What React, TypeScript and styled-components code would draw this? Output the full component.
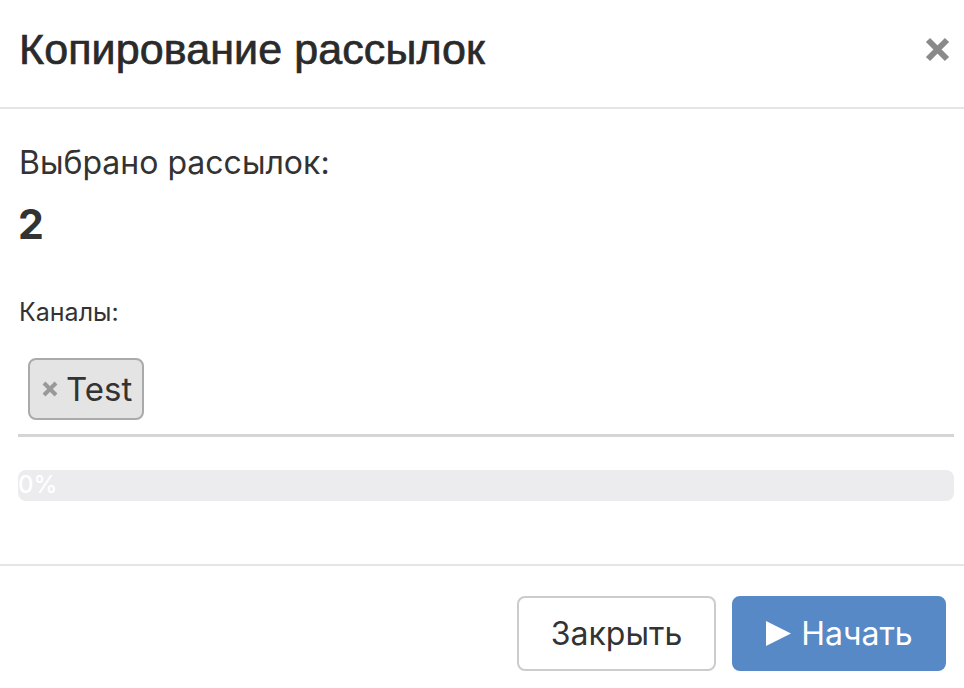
import React from "react";
import styled, { createGlobalStyle } from "styled-components";

const Global = createGlobalStyle`
  html, body { margin: 0; padding: 0; background: #fff; }
  body { font-family: Inter, "Noto Sans", sans-serif; color: #333; }
  * { box-sizing: border-box; }
`;

const Modal = styled.div`
  width: 964px;
  display: flex;
  flex-direction: column;
  background: #fff;
`;

const Header = styled.div`
  height: 109px;
  display: flex;
  align-items: center;
  justify-content: space-between;
  padding: 0 14px 8px 19px;
  border-bottom: 2px solid #e5e5e5;
`;

const Title = styled.h4`
  margin: 0;
  font-family: "Liberation Sans", Arial, sans-serif;
  font-weight: 400;
  font-size: 43px;
  line-height: 1.1;
  letter-spacing: 0.1px;
  color: #2a2a2a;
  -webkit-text-stroke: 0.7px #2a2a2a;
`;

const CloseBtn = styled.button`
  border: 0;
  background: none;
  padding: 0;
  width: 25px;
  height: 25px;
  display: flex;
  cursor: pointer;
`;

const Body = styled.div`
  display: flex;
  flex-direction: column;
  padding: 35px 10px 63px 18px;
`;

const Label = styled.div<{ $size: number; $mt?: number }>`
  font-size: ${(p) => p.$size}px;
  line-height: 1.2;
  margin-top: ${(p) => p.$mt ?? 0}px;
  color: #333;
  padding-left: 1px;
`;

const Count = styled.div`
  font-size: 41px;
  font-weight: 700;
  line-height: 1.2;
  margin-top: 18px;
  color: #333;
`;

const TagBox = styled.div`
  margin-top: 31px;
  display: flex;
  flex-wrap: wrap;
  padding: 0 0 14px 10px;
  border-bottom: 3px solid #d5d5d5;
`;

const Tag = styled.div`
  display: flex;
  align-items: center;
  gap: 8px;
  height: 62px;
  padding: 0 10px 0 12px;
  background: #e4e4e4;
  border: 2px solid #aaa;
  border-radius: 8px;
  font-size: 33px;
  color: #333;
`;

const Progress = styled.div`
  margin-top: 33px;
  height: 31px;
  border-radius: 8px;
  background: #ececee;
  display: flex;
  align-items: center;
  overflow: hidden;
`;

const ProgressText = styled.span`
  font-size: 24px;
  font-weight: 500;
  color: #fff;
  line-height: 1;
`;

const Footer = styled.div`
  display: flex;
  justify-content: flex-end;
  gap: 16px;
  padding: 30px 18px 18px 18px;
  border-top: 2px solid #e5e5e5;
`;

const Button = styled.button<{ $primary?: boolean; $w: number }>`
  width: ${(p) => p.$w}px;
  height: 75px;
  border-radius: 8px;
  font-family: Inter, "Noto Sans", sans-serif;
  font-size: 32px;
  display: flex;
  align-items: center;
  justify-content: center;
  gap: 10px;
  cursor: pointer;
  background: ${(p) => (p.$primary ? "#5689c6" : "#fff")};
  color: ${(p) => (p.$primary ? "#fff" : "#333")};
  border: 2px solid ${(p) => (p.$primary ? "#5689c6" : "#ccc")};
`;

export default function App() {
  return (
    <>
      <Global />
      <Modal>
        <Header>
          <Title>Копирование рассылок</Title>
          <CloseBtn aria-label="close">
            <svg width="25" height="25" viewBox="0 0 25 25">
              <path d="M3 3 L22 22 M22 3 L3 22" stroke="#8a8a8a" strokeWidth="6" strokeLinecap="butt" />
            </svg>
          </CloseBtn>
        </Header>
        <Body>
          <Label $size={32}>Выбрано рассылок:</Label>
          <Count>2</Count>
          <Label $size={25} $mt={47}>Каналы:</Label>
          <TagBox>
            <Tag>
              <svg width="16" height="16" viewBox="0 0 16 16">
                <path d="M2 2 L14 14 M14 2 L2 14" stroke="#999" strokeWidth="4" />
              </svg>
              Test
            </Tag>
          </TagBox>
          <Progress>
            <ProgressText>0%</ProgressText>
          </Progress>
        </Body>
        <Footer>
          <Button $w={199}>Закрыть</Button>
          <Button $w={214} $primary>
            <svg width="26" height="25" viewBox="0 0 26 25">
              <path d="M1 0 L26 12.5 L1 25 Z" fill="#fff" />
            </svg>
            Начать
          </Button>
        </Footer>
      </Modal>
    </>
  );
}
